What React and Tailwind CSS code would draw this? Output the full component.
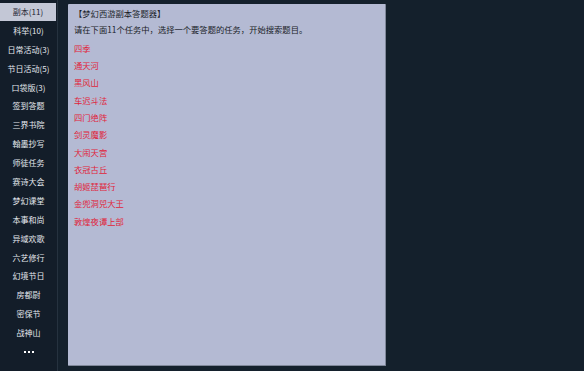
const tabs = [
  "副本(11)",
  "科举(10)",
  "日常活动(3)",
  "节日活动(5)",
  "口袋版(3)",
  "签到答题",
  "三界书院",
  "翰墨抄写",
  "师徒任务",
  "赛诗大会",
  "梦幻课堂",
  "本事和尚",
  "异域欢歌",
  "六艺修行",
  "幻境节日",
  "房都尉",
  "密保节",
  "战神山",
];

const quests = [
  "四季",
  "通天河",
  "黑风山",
  "车迟斗法",
  "四门绝阵",
  "剑灵魔影",
  "大闹天宫",
  "衣冠古丘",
  "胡姬琵琶行",
  "金兜洞兕大王",
  "敦煌夜谭上部",
];

const font = {
  fontFamily: '"Noto Sans CJK SC", "Liberation Sans", sans-serif',
};

export default function App() {
  return (
    <div
      className="flex w-[584px] h-[371px] bg-[#14202c] overflow-hidden"
      style={font}
    >
      {/* Sidebar tabs */}
      <div className="flex flex-col w-[58px] shrink-0 pt-[2.5px] border-r border-[#26323f] bg-[#131d29]">
        {tabs.map((t, i) => (
          <div
            key={t}
            className={`flex items-center justify-center h-[18.9px] text-[8px] leading-none ${
              i === 0
                ? "bg-[#c3c7d6] text-[#1c2230] mr-[1px]"
                : "text-[#e4e8ee]"
            }`}
          >
            {t}
          </div>
        ))}
        <div className="flex items-center justify-center gap-[2px] h-[18.9px]">
          <span className="w-[2px] h-[2px] bg-white" />
          <span className="w-[2px] h-[2px] bg-white" />
          <span className="w-[2px] h-[2px] bg-white" />
        </div>
      </div>

      {/* Answer panel */}
      <div className="ml-[10px] mt-[4px] w-[318px] h-[362px] bg-[#b4bad3] border-r border-b border-[#7f8799] rounded-[1px] px-[6px] pt-[5px]">
        <p className="text-[8.3px] leading-none text-[#1a1d28]">
          【梦幻西游副本答题器】
        </p>
        <p className="mt-[7.7px] text-[8.3px] leading-none text-[#1a1d28]">
          请在下面11个任务中，选择一个要答题的任务，开始搜索题目。
        </p>
        <div className="flex flex-col mt-[6px]">
          {quests.map((q) => (
            <span
              key={q}
              className="h-[17.3px] flex items-center text-[8.3px] leading-none text-[#e0243a]"
            >
              {q}
            </span>
          ))}
        </div>
      </div>
    </div>
  );
}
